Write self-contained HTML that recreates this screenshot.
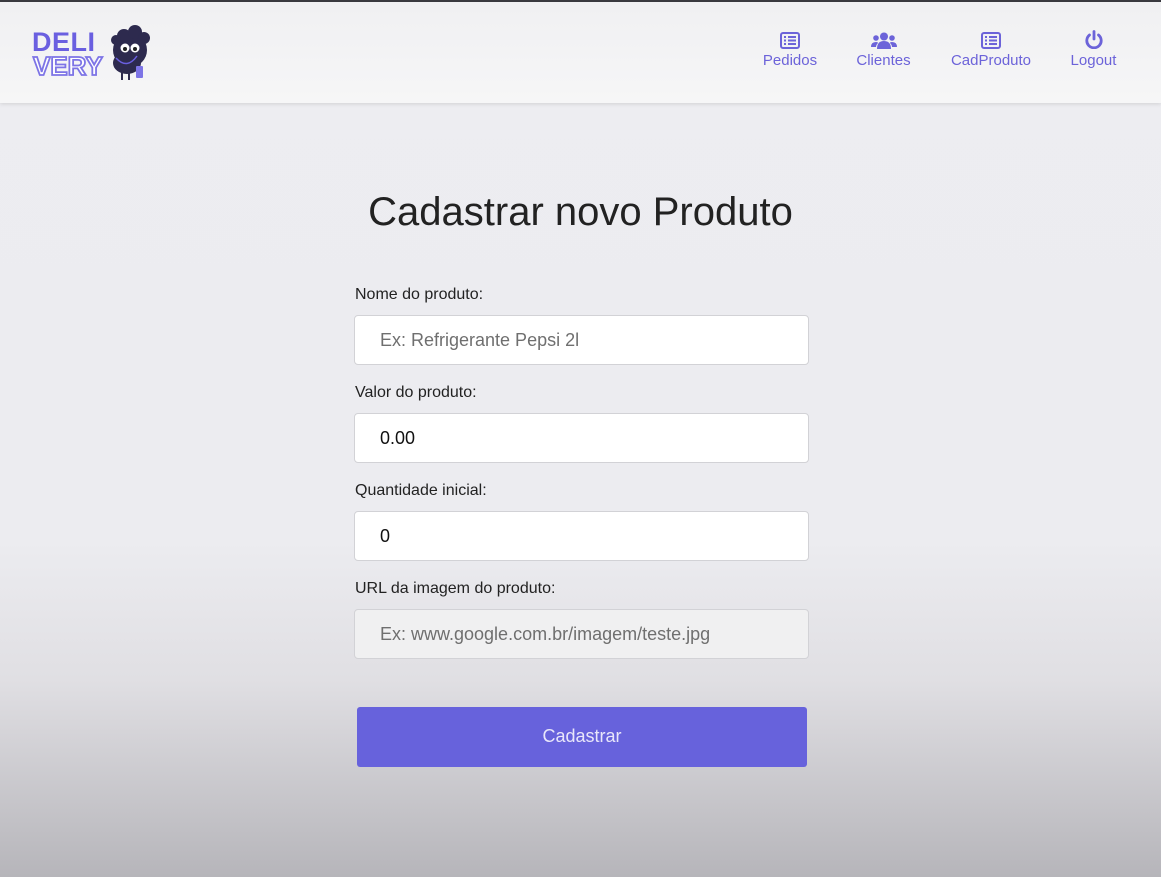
<!DOCTYPE html>
<html><head><meta charset="utf-8"><style>
*{box-sizing:border-box;margin:0;padding:0}
body{width:1161px;height:877px;overflow:hidden;font-family:"Liberation Sans",Arial,sans-serif;background:linear-gradient(#ededf1 0px,#ececf0 540px,#e0dfe3 680px,#b6b5ba 877px);position:relative}
.top{position:absolute;top:0;left:0;width:1161px;height:2px;background:#3a3a40}
header{position:absolute;top:2px;left:0;width:1161px;height:101px;background:linear-gradient(#f0f0f2,#f6f6f7);box-shadow:0 1px 4px rgba(0,0,0,.12)}
.nav{position:absolute;top:32px;text-align:center;color:#6c63d9;font-size:15px}
.nav svg{display:block;margin:0 auto 3px}
h1{position:absolute;top:190px;width:1161px;text-align:center;font-weight:400;font-size:40px;color:#222}
label{position:absolute;left:355px;font-size:16px;color:#222}
.in{position:absolute;left:354px;width:455px;height:50px;background:#fff;border:1px solid #d2d2d6;border-radius:4px;font-size:18px;padding:14px 0 0 25px;color:#111}
.ph{color:#6f6f6f}
.btn{position:absolute;left:357px;top:707px;width:450px;height:60px;background:#6762dc;border-radius:3px;color:#e8e6fa;font-size:18px;text-align:center;line-height:58px}
</style></head><body>
<div class="top"></div>
<header>
<svg style="position:absolute;left:30px;top:20px" width="125" height="60" viewBox="0 0 125 60">
<text x="2" y="29" font-family="Liberation Sans" font-weight="900" font-size="27" fill="#6a5fe0" letter-spacing="0.5">DELI</text>
<text x="3" y="53" font-family="Liberation Sans" font-weight="900" font-size="26" fill="#fff" stroke="#7d74e6" stroke-width="1.8">VERY</text>
<circle cx="100" cy="28" r="17" fill="#2d2a4e"/>
<circle cx="94" cy="14" r="7" fill="#2d2a4e"/><circle cx="105" cy="10" r="7" fill="#2d2a4e"/><circle cx="114" cy="16" r="6" fill="#2d2a4e"/><circle cx="86" cy="18" r="5" fill="#2d2a4e"/>
<ellipse cx="97" cy="41" rx="14" ry="11" fill="#2d2a4e"/>
<circle cx="95" cy="26" r="4.5" fill="#fff"/><circle cx="105" cy="26" r="4.5" fill="#fff"/>
<circle cx="95" cy="27" r="2" fill="#222"/><circle cx="105" cy="27" r="2" fill="#222"/>
<path d="M86 36 Q97 48 107 34" stroke="#6a5fe0" stroke-width="1.5" fill="none"/>
<line x1="92" y1="50" x2="92" y2="58" stroke="#2d2a4e" stroke-width="2"/><line x1="99" y1="50" x2="99" y2="58" stroke="#2d2a4e" stroke-width="2"/>
<rect x="106" y="44" width="7" height="12" rx="1" fill="#7d74e6"/>
</svg>
</header>
<div class="nav" style="left:762px;width:56px"><svg width="20" height="17" viewBox="0 0 20 17"><rect x="1" y="1" width="18" height="15" rx="2" fill="none" stroke="#6c63d9" stroke-width="2"/><g fill="#6c63d9"><rect x="4" y="4" width="2" height="2"/><rect x="4" y="7.5" width="2" height="2"/><rect x="4" y="11" width="2" height="2"/><rect x="8" y="4" width="8" height="2"/><rect x="8" y="7.5" width="8" height="2"/><rect x="8" y="11" width="8" height="2"/></g></svg>Pedidos</div>
<div class="nav" style="left:855px;width:57px"><svg width="26" height="17" viewBox="0 0 26 17" fill="#6c63d9"><circle cx="13" cy="4.5" r="4"/><circle cx="5" cy="6" r="2.8"/><circle cx="21" cy="6" r="2.8"/><path d="M6 17 Q6 9 13 9 Q20 9 20 17Z"/><path d="M0 15 Q0 10 5 10 Q7 10 7 11 Q5 13 5 15Z"/><path d="M26 15 Q26 10 21 10 Q19 10 19 11 Q21 13 21 15Z"/></svg>Clientes</div>
<div class="nav" style="left:950px;width:82px"><svg width="20" height="17" viewBox="0 0 20 17"><rect x="1" y="1" width="18" height="15" rx="2" fill="none" stroke="#6c63d9" stroke-width="2"/><g fill="#6c63d9"><rect x="4" y="4" width="2" height="2"/><rect x="4" y="7.5" width="2" height="2"/><rect x="4" y="11" width="2" height="2"/><rect x="8" y="4" width="8" height="2"/><rect x="8" y="7.5" width="8" height="2"/><rect x="8" y="11" width="8" height="2"/></g></svg>CadProduto</div>
<div class="nav" style="left:1069px;width:49px;top:30px"><svg width="20" height="19" viewBox="0 0 20 19"><path d="M5.5 5 A7.2 7.2 0 1 0 14.5 5" fill="none" stroke="#6c63d9" stroke-width="2.8" stroke-linecap="round"/><line x1="10" y1="1.5" x2="10" y2="9" stroke="#6c63d9" stroke-width="2.8" stroke-linecap="round"/></svg>Logout</div>
<h1>Cadastrar novo Produto</h1>
<label style="top:286px">Nome do produto:</label>
<div class="in ph" style="top:315px">Ex: Refrigerante Pepsi 2l</div>
<label style="top:384px">Valor do produto:</label>
<div class="in" style="top:413px">0.00</div>
<label style="top:482px">Quantidade inicial:</label>
<div class="in" style="top:511px">0</div>
<label style="top:580px">URL da imagem do produto:</label>
<div class="in ph" style="top:609px;background:#f0f0f1">Ex: www.google.com.br/imagem/teste.jpg</div>
<div class="btn">Cadastrar</div>
</body></html>
